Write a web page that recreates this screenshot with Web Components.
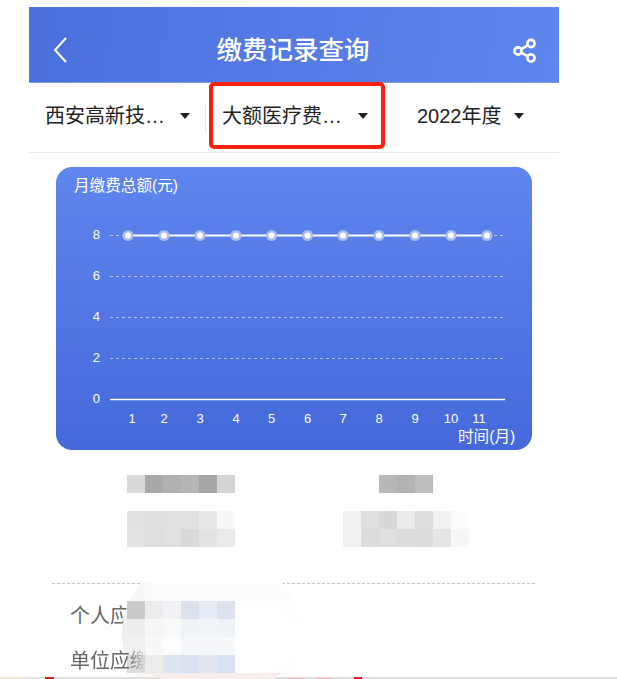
<!DOCTYPE html>
<html lang="zh">
<head>
<meta charset="utf-8">
<title>缴费记录查询</title>
<style>
  html, body { margin: 0; padding: 0; background: #fff; }
  body { font-family: "Liberation Sans", "Noto Sans CJK SC", sans-serif; height: 679px; overflow: hidden; }
</style>
</head>
<body>
<record-page></record-page>
<crop-strip></crop-strip>

<script>
// 顶部导航
class NavBar extends HTMLElement {
  constructor() {
    super();
    this.attachShadow({ mode: 'open' });
    this.shadowRoot.innerHTML = `
      <style>
        :host { display: flex; align-items: center; justify-content: space-between; height: 76px; padding: 0 21px; box-sizing: border-box; background: linear-gradient(100deg, #4a70dd, #5f85ee); border-bottom: 1px solid #7b9cf2; color: #fff; }
        .title { font-family: "Noto Sans CJK SC", sans-serif; font-size: 25.5px; font-weight: 500; line-height: 30px; margin: 7px 0 0 6px; }
        svg { display: block; margin-top: 9px; }
      </style>
      <svg width="20" height="30" viewBox="0 0 20 30"><path d="M16 4 L5 16 L16 28" fill="none" stroke="#fff" stroke-width="2"/></svg>
      <div class="title"><slot></slot></div>
      <svg width="28" height="34" viewBox="0 0 28 34" fill="none" stroke="#fff" stroke-width="2.6"><circle cx="21" cy="11.5" r="3.6"/><circle cx="21" cy="26" r="3.6"/><circle cx="8" cy="19" r="3.6"/><path d="M11.2 17.2 L17.8 13.4 M11.2 20.8 L17.8 24.2"/></svg>
    `;
  }
}

// 下拉筛选项
class FilterItem extends HTMLElement {
  constructor() {
    super();
    this.attachShadow({ mode: 'open' });
    this.shadowRoot.innerHTML = `
      <style>
        :host { flex: 1; display: flex; align-items: center; justify-content: space-between; padding-bottom: 4px; font-size: 20px; color: #222; line-height: 28px; }
        i { display: block; width: 0; height: 0; border: 5.5px solid transparent; border-top: 6px solid #222; border-bottom: 0; }
      </style>
      <span><slot></slot></span><i></i>
    `;
  }
}

class FilterBar extends HTMLElement {
  constructor() {
    super();
    this.attachShadow({ mode: 'open' });
    this.shadowRoot.innerHTML = `
      <style>
        :host { display: grid; grid-template-columns: 177px 181px 172px; height: 70px; box-sizing: border-box; border-bottom: 1px solid #e8e8e8; position: relative; align-items: center; }
        .cell { display: flex; height: 100%; align-items: center; box-sizing: border-box; }
        .c1 { padding: 0 16px 0 16px; position: relative; }
        .c1::after { content: ""; position: absolute; right: 0; top: 20px; height: 30px; border-right: 1px solid #e6e6e6; }
        .c2 { padding: 0 19px 0 16px; }
        .c3 { padding: 0 35px 0 30px; }
        .mark { position: absolute; left: 180px; top: -1px; width: 176px; height: 67px; border: 4px solid #f9210f; border-radius: 5px; box-sizing: border-box; }
      </style>
      <div class="cell c1"><slot name="a"></slot></div>
      <div class="cell c2"><slot name="b"></slot></div>
      <div class="cell c3"><slot name="c"></slot></div>
      <div class="mark"></div>
    `;
  }
}

// 月缴费折线图
class FeeChart extends HTMLElement {
  constructor() {
    super();
    this.attachShadow({ mode: 'open' });
    const xs = [128, 164, 200, 236, 271.5, 307.5, 343, 379, 415, 451, 487];
    const labelX = [132, 164, 200, 236, 271.5, 307.5, 343, 379, 415, 451, 479];
    const x0 = 110, x1 = 505;
    const ox = 56, oy = 167;
    const grid = [[8, 235], [6, 276], [4, 317], [2, 358], [0, 399]];
    let lines = '';
    grid.forEach(([v, y]) => {
      lines += `<text x="${100 - ox}" y="${y + 4 - oy}" text-anchor="end" class="t">${v}</text>`;
      lines += `<line x1="${x0 - ox}" x2="${x1 - ox}" y1="${y - oy + .5}" y2="${y - oy + .5}" stroke="#fff" stroke-opacity="${v === 0 ? 1 : .55}" stroke-dasharray="${v === 0 ? 'none' : '3 3'}" stroke-width="${v === 0 ? 1.5 : 1}"/>`;
    });
    let dots = '';
    xs.forEach(x => {
      dots += `<circle cx="${x - ox}" cy="${235.5 - oy}" r="5.5" fill="#a9bcf3"/><circle cx="${x - ox}" cy="${235.5 - oy}" r="3" fill="#fff"/>`;
    });
    const labels = labelX.map((x, i) => `<text x="${x - ox}" y="${423 - oy}" text-anchor="middle" class="t">${i + 1}</text>`).join('');
    this.shadowRoot.innerHTML = `
      <style>
        :host { display: block; height: 283px; margin: 14px 27px 0; border-radius: 16px; background: linear-gradient(180deg, #5f85ee, #4569db); color: #fff; overflow: hidden; }
        svg { display: block; }
        .t { font: 13px "Liberation Sans", sans-serif; fill: #fff; }
        .c { font: 15.6px "Liberation Sans", "Noto Sans CJK SC", sans-serif; fill: #fff; }
      </style>
      <svg width="476" height="283" viewBox="0 0 476 283">
        <text x="18" y="24" class="c">月缴费总额(元)</text>
        ${lines}
        <line x1="${128 - ox}" x2="${487 - ox}" y1="${235.5 - oy}" y2="${235.5 - oy}" stroke="#fff" stroke-width="2"/>
        ${dots}
        ${labels}
        <text x="402" y="274.5" class="c">时间(月)</text>
      </svg>
    `;
  }
}

// 打码块
class MosaicBlock extends HTMLElement {
  constructor() {
    super();
    this.attachShadow({ mode: 'open' });
  }
  connectedCallback() {
    const rows = this.getAttribute('cells').split('|').map(r => r.split(','));
    const html = rows.map(r => r.map(c => `<b style="background:#${c}"></b>`).join('')).join('');
    this.shadowRoot.innerHTML = `
      <style>
        :host { display: grid; grid-template-columns: repeat(${rows[0].length}, 18px); grid-auto-rows: 18px; }
        b { display: block; }
      </style>${html}`;
  }
}

// 汇总数据两列
class SummaryGrid extends HTMLElement {
  constructor() {
    super();
    this.attachShadow({ mode: 'open' });
    this.shadowRoot.innerHTML = `
      <style>
        :host { display: grid; grid-template-columns: 314px 216px; padding-top: 25px; height: 133px; box-sizing: border-box; }
        .col { display: flex; flex-direction: column; gap: 18px; padding-left: 98px; }
        .col2 { padding-left: 0; }
        .head2 { margin-left: 36px; }
      </style>
      <div class="col">
        <mosaic-block cells="d9dadc,a9a9aa,b1b1b2,b6b6b7,a7a7a8,d5d5d6"></mosaic-block>
        <mosaic-block cells="e2e2e2,e0e0e0,e1e1e1,e1e1e1,e9e9e9,f8f8f8|e3e3e3,dfdfdf,e1e1e1,d9d9d9,e4e4e4,eaeaea"></mosaic-block>
      </div>
      <div class="col col2">
        <mosaic-block class="head2" cells="b8b8b9,b3b3b4,bebebf"></mosaic-block>
        <mosaic-block cells="f2f2f2,dfdfdf,d8d8d8,e9ebea,dddddd,f2f2f2,fcfcfc|f2f2f2,dcdcdc,e0e0e0,dcdcdc,dbdbdb,e5e5e5,f7f7f7"></mosaic-block>
      </div>
    `;
  }
}

// 明细列表
class DetailList extends HTMLElement {
  constructor() {
    super();
    this.attachShadow({ mode: 'open' });
    this.shadowRoot.innerHTML = `
      <style>
        :host { display: block; position: relative; overflow: hidden; margin: 0 22px 0 23px; height: 94px; font-family: "Noto Sans CJK SC", sans-serif; font-size: 20px; color: #666; }
        .dash { height: 1px; background: repeating-linear-gradient(90deg, #c4c4c4 0 3px, transparent 3px 5px); }
        .rows { display: flex; flex-direction: column; gap: 17px; padding: 17px 0 0 18px; line-height: 28px; }
        .blob { position: absolute; left: 70px; top: -30px; width: 180px; height: 160px; background: linear-gradient(90deg, #ebebeb, #f4f4f4 8px, #fcfcfc 36px); border-radius: 50%; }
        mosaic-block { position: absolute; left: 75px; top: 18px; }
        .right { position: absolute; left: 183px; top: 18px; width: 70px; height: 76px; background: radial-gradient(ellipse at left, #fff 60%, transparent 100%); }
        .over { position: relative; z-index: 2; -webkit-mask-image: linear-gradient(90deg, #000 58px, rgba(0,0,0,.6) 64px, transparent 76px); mask-image: linear-gradient(90deg, #000 58px, rgba(0,0,0,.6) 64px, transparent 76px); }
        .pink { position: absolute; left: 90px; top: 90px; width: 142px; height: 4px; background: #f7eeec; clip-path: polygon(0 0, 100% 0, 92% 100%, 12% 100%); }
      </style>
      <div class="dash"></div>
      <div class="blob"></div>
      <div class="right"></div>
      <mosaic-block cells="cbcbcb,ececec,f0f2f6,dbe2ee,e7ecf4,dce3ef|ececec,f6f6f6,f8f9fb,eff2f7,f2f4f9,eff2f7|f0f0f0,f8f8f8,fdfdfd,f5f7fa,f4f6fa,f6f8fa|dcdcdc,ececec,dde5f0,d9e2ee,e3e8f0,d9e3ef"></mosaic-block>
      <div class="pink"></div>
      <div class="rows"><div class="low">个人应缴</div><div class="over">单位应缴</div></div>
    `;
  }
}

// 截图底边
class CropStrip extends HTMLElement {
  constructor() {
    super();
    this.attachShadow({ mode: 'open' });
    this.shadowRoot.innerHTML = `
      <style>
        :host { display: block; height: 2px; background: linear-gradient(90deg,
          #efe9d6 0 25px, #e2e2e2 25px 45px, #f01010 45px 54px, #e4e0e0 54px 160px,
          #f7eeec 160px 275px, #dedede 275px 288px, #eec4c4 288px 304px, #dedede 304px 316px,
          #eec4c4 316px 332px, #dedede 332px 354px, #f01010 354px 362px, #dedede 362px); }
      </style>
    `;
  }
}

// 整页
class RecordPage extends HTMLElement {
  constructor() {
    super();
    this.attachShadow({ mode: 'open' });
    this.shadowRoot.innerHTML = `
      <style>
        :host { display: block; width: 530px; margin: 0 0 0 29px; padding-top: 7px; }
      </style>
      <nav-bar>缴费记录查询</nav-bar>
      <filter-bar>
        <filter-item slot="a">西安高新技…</filter-item>
        <filter-item slot="b">大额医疗费…</filter-item>
        <filter-item slot="c">2022年度</filter-item>
      </filter-bar>
      <fee-chart></fee-chart>
      <summary-grid></summary-grid>
      <detail-list></detail-list>
    `;
  }
}

customElements.define('nav-bar', NavBar);
customElements.define('filter-item', FilterItem);
customElements.define('filter-bar', FilterBar);
customElements.define('fee-chart', FeeChart);
customElements.define('mosaic-block', MosaicBlock);
customElements.define('summary-grid', SummaryGrid);
customElements.define('detail-list', DetailList);
customElements.define('crop-strip', CropStrip);
customElements.define('record-page', RecordPage);
</script>
</body>
</html>
